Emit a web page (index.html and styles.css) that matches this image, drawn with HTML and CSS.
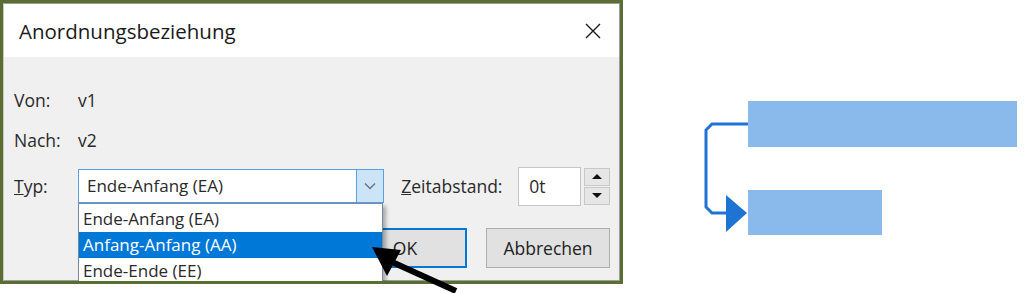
FILE: index.html
```html
<!DOCTYPE html>
<html lang="de">
<head>
  <meta charset="UTF-8">
  <title>Anordnungsbeziehung</title>
  <link rel="stylesheet" href="styles.css">
</head>
<body>
  <div class="page">
    <div class="dialog-frame">
      <div class="window">
        <div class="titlebar">
          <span class="title">Anordnungsbeziehung</span>
          <svg class="close" width="16" height="16" viewBox="0 0 16 16">
            <path d="M1 1 L15 15 M15 1 L1 15" stroke="#1a1a1a" stroke-width="1.4" fill="none"/>
          </svg>
        </div>
        <div class="content">
          <div class="info-row"><span class="label">Von:</span><span>v1</span></div>
          <div class="info-row"><span class="label">Nach:</span><span>v2</span></div>
          <div class="type-row">
            <span class="label"><u>T</u>yp:</span>
            <div class="combo">
              <span class="combo-value">Ende-Anfang (EA)</span>
              <span class="combo-btn">
                <svg width="12" height="8" viewBox="0 0 12 8"><path d="M1 1.5 L6 6.5 L11 1.5" stroke="#707070" stroke-width="1.3" fill="none"/></svg>
              </span>
              <ul class="combo-list">
                <li>Ende-Anfang (EA)</li>
                <li class="selected">Anfang-Anfang (AA)</li>
                <li>Ende-Ende (EE)</li>
              </ul>
            </div>
            <span class="lag-label"><u>Z</u>eitabstand:</span>
            <div class="lag-input">0t</div>
            <div class="spinner">
              <span class="spin"><i class="tri up"></i></span>
              <span class="spin"><i class="tri down"></i></span>
            </div>
          </div>
          <div class="button-row">
            <button class="btn default">OK</button>
            <button class="btn">Abbrechen</button>
          </div>
        </div>
      </div>
    </div>

    <svg class="diagram" width="401" height="293" viewBox="623 0 401 293">
      <rect x="748" y="101" width="269" height="46" fill="#8ab9eb"/>
      <rect x="748" y="190" width="134" height="45" fill="#8ab9eb"/>
      <path d="M748 124 H712 L706 130 V207 L712 213 H730" stroke="#1f74d3" stroke-width="3" fill="none"/>
      <polygon points="726,195 747,213 726,232" fill="#1f74d3"/>
    </svg>

    <svg class="pointer" width="100" height="60" viewBox="360 238 100 60">
      <path d="M392 262 L456 291" stroke="#000" stroke-width="6" fill="none"/>
      <polygon points="372,247 401,250 387,276" fill="#000"/>
    </svg>
  </div>
</body>
</html>
```

FILE: styles.css
```css
body {
  margin: 0;
  background: #fff;
  font-family: 'Open Sans', 'Noto Sans', sans-serif;
}
.page {
  position: relative;
  display: flex;
  width: 1024px;
  height: 293px;
}
.dialog-frame {
  flex: none;
  width: 623px;
  height: 284px;
  box-sizing: border-box;
  border: 3px solid #5a6e33;
  overflow: hidden;
}
.window {
  height: 100%;
  box-sizing: border-box;
  border: 1px solid #9c9c9c;
  border-left-color: #c8c8c8;
  display: flex;
  flex-direction: column;
}
.titlebar {
  flex: none;
  height: 53px;
  background: #fff;
  display: flex;
  align-items: center;
  justify-content: space-between;
  padding: 0 18px 0 15px;
}
.title {
  font-size: 20.5px;
  color: #1a1a1a;
}
.content {
  flex: 1;
  background: #f0f0f0;
  padding: 31px 9px 0 10px;
  font-size: 17.5px;
  color: #2a2a2a;
}
.info-row {
  display: flex;
  align-items: center;
  height: 24px;
}
.info-row + .info-row {
  margin-top: 16px;
}
.label {
  width: 64px;
  flex: none;
}
.type-row {
  display: flex;
  align-items: center;
  height: 40px;
  margin-top: 14px;
}
.combo {
  position: relative;
  display: flex;
  width: 307px;
  height: 34px;
  box-sizing: border-box;
  border: 1px solid #5a9ee4;
  background: #fff;
  font-size: 17px;
}
.combo-value {
  flex: 1;
  padding-left: 8px;
  line-height: 32px;
}
.combo-btn {
  width: 26px;
  display: flex;
  align-items: center;
  justify-content: center;
  background: #cce4f7;
  border-left: 1px solid #5a9ee4;
}
.combo-list {
  position: absolute;
  left: -1px;
  top: 33px;
  width: 305px;
  box-sizing: border-box;
  margin: 0;
  padding: 2px 0 0;
  list-style: none;
  background: #fff;
  border: 1px solid #7a8a9e;
  box-shadow: 3px 3px 4px rgba(0, 0, 0, 0.3);
  z-index: 2;
}
.combo-list li {
  height: 26px;
  line-height: 26px;
  padding-left: 4px;
}
.combo-list li.selected {
  background: #0078d7;
  color: #fff;
}
.lag-label {
  width: 101px;
  margin-left: 17px;
  white-space: nowrap;
}
.lag-input {
  width: 63px;
  height: 39px;
  box-sizing: border-box;
  margin-left: 16px;
  padding-left: 10px;
  line-height: 37px;
  background: #fff;
  border: 1px solid #c6c6c6;
}
.spinner {
  display: flex;
  flex-direction: column;
  gap: 1px;
  width: 26px;
  height: 37px;
  margin-left: 3px;
}
.spin {
  flex: 1;
  display: flex;
  align-items: center;
  justify-content: center;
  background: #e6e6e6;
  border: 1px solid #c8c8c8;
}
.tri {
  width: 0;
  height: 0;
  border-left: 5px solid transparent;
  border-right: 5px solid transparent;
}
.tri.up {
  border-bottom: 5px solid #111;
}
.tri.down {
  border-top: 5px solid #111;
}
.button-row {
  display: flex;
  justify-content: flex-end;
  gap: 19px;
  margin-top: 22px;
}
.btn {
  width: 124px;
  height: 40px;
  box-sizing: border-box;
  border: 1px solid #adadad;
  background: #e1e1e1;
  font-family: inherit;
  font-size: 17.5px;
  color: #222;
  padding: 0;
}
.btn.default {
  border: 2px solid #0078d7;
}
.diagram {
  flex: none;
}
.pointer {
  position: absolute;
  left: 360px;
  top: 238px;
  z-index: 3;
}
```
